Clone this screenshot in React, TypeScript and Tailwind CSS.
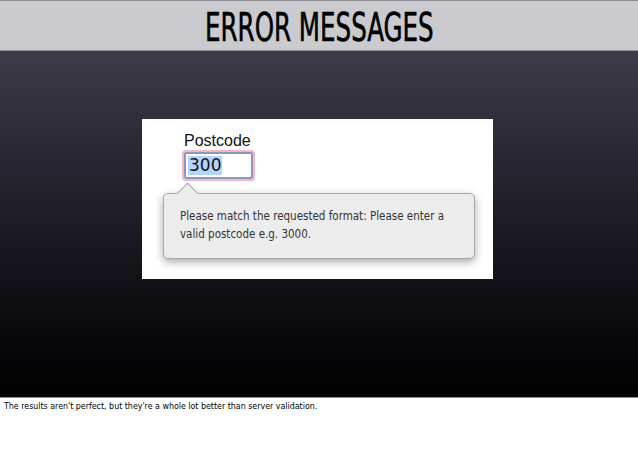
export default function App() {
    return (
        <div className="w-[638px] h-[457px] bg-white flex flex-col overflow-hidden">
            {/* Заголовок слайда */}
            <div className="h-[51px] shrink-0 bg-[#cbcbcf] border-t border-b border-[#8e8e94] flex items-center justify-center">
                <h1
                    className="text-[39px] leading-none text-black scale-x-[0.70] whitespace-nowrap mt-[4px] [-webkit-text-stroke:0.6px_black]"
                    style={{ fontFamily: '"DejaVu Sans Condensed", "DejaVu Sans", sans-serif' }}
                >
                    ERROR MESSAGES
                </h1>
            </div>

            {/* Тело слайда */}
            <div className="h-[347px] shrink-0 bg-gradient-to-b from-[#3d3b49] via-[#1d1c24] to-[#020203] border-b border-[#8a8a8a] flex justify-center pt-[68px]">
                <div className="w-[351px] h-[160px] bg-white ml-[-3px] relative" style={{ fontFamily: '"Liberation Sans", Arial, sans-serif' }}>
                    <div className="pl-[42px] pt-[12px]">
                        <div className="text-[16px] leading-[20px] text-[#111]">Postcode</div>
                        <div className="mt-[1px] w-[69px] h-[27px] border-[2px] border-[#8a98c8] rounded-[2px] shadow-[0_0_0_2px_#f4b8c4] flex items-center px-[2px]">
                            <span
                                className="bg-[#b3d4fd] text-[17px] leading-[19px] text-[#111] px-[1px]"
                                style={{ fontFamily: '"DejaVu Sans", sans-serif' }}
                            >
                                300
                            </span>
                        </div>
                    </div>

                    {/* Всплывающая подсказка */}
                    <div className="absolute left-[21px] top-[74px] w-[312px] h-[66px] bg-[#ececec] border border-[#a8a8a8] rounded-[5px] shadow-[0_3px_8px_rgba(0,0,0,0.35)] pl-[16px] pt-[13px]">
                        <div className="absolute left-[12px] top-[-12px] w-[24px] h-[12px] overflow-hidden">
                            <div className="w-[17px] h-[17px] bg-[#ececec] border border-[#a8a8a8] rotate-45 translate-x-[3px] translate-y-[4px]" />
                        </div>
                        <p
                            className="text-[11.5px] leading-[18px] text-[#333] whitespace-nowrap"
                            style={{ fontFamily: '"DejaVu Sans Condensed", "DejaVu Sans", sans-serif' }}
                        >
                            Please match the requested format: Please enter a
                            <br />
                            valid postcode e.g. 3000.
                        </p>
                    </div>
                </div>
            </div>

            {/* Подпись */}
            <p
                className="pl-[4px] pt-[2px] text-[8.8px] leading-[12px] text-black"
                style={{ fontFamily: '"DejaVu Sans Condensed", "DejaVu Sans", sans-serif' }}
            >
                The results aren't perfect, but they're a whole lot better than server validation.
            </p>
        </div>
    );
}
